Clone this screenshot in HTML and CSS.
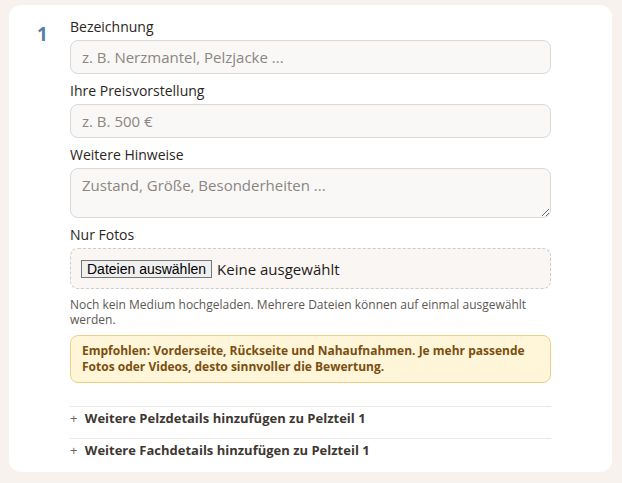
FILE: index.html
```html
<!DOCTYPE html>
<html lang="de">
<head>
    <meta charset="UTF-8">
    <meta name="viewport" content="width=device-width, initial-scale=1.0">
    <title>Pelzteil erfassen</title>
    <link rel="stylesheet" href="styles.css">
</head>
<body>

    <div class="card">
        <div class="item-number">1</div>
        <div class="item-fields">
            <div class="field">
                <label class="field-label">Bezeichnung</label>
                <input class="input" type="text" placeholder="z. B. Nerzmantel, Pelzjacke ...">
            </div>

            <div class="field">
                <label class="field-label">Ihre Preisvorstellung</label>
                <input class="input" type="text" placeholder="z. B. 500 €">
            </div>

            <div class="field">
                <label class="field-label">Weitere Hinweise</label>
                <textarea class="input textarea" placeholder="Zustand, Größe, Besonderheiten ..."></textarea>
            </div>

            <div class="field">
                <label class="field-label">Nur Fotos</label>
                <div class="upload">
                    <span class="upload-btn">Dateien auswählen</span>
                    <span class="upload-status">Keine ausgewählt</span>
                </div>
            </div>

            <p class="help">Noch kein Medium hochgeladen. Mehrere Dateien können auf einmal ausgewählt werden.</p>

            <div class="notice">
                Empfohlen: Vorderseite, Rückseite und Nahaufnahmen. Je mehr passende Fotos oder Videos, desto sinnvoller die Bewertung.
            </div>

            <div class="extras">
                <div class="extra-row"><span class="plus">+</span> Weitere Pelzdetails hinzufügen zu Pelzteil 1</div>
                <div class="extra-row"><span class="plus">+</span> Weitere Fachdetails hinzufügen zu Pelzteil 1</div>
            </div>
        </div>
    </div>

</body>
</html>
```

FILE: styles.css
```css
body {
    font-family: 'Open Sans', 'Noto Sans', sans-serif;
    background-color: #f7f2ee;
    margin: 0;
    padding: 5px 10px 0 9px;
    color: #2b2622;
}

.card {
    background-color: #fff;
    border-radius: 12px;
    padding: 13px 61px 2px 28px;
    display: grid;
    grid-template-columns: 33px 1fr;
}

.item-number {
    font-size: 19px;
    font-weight: bold;
    color: #5a7da3;
    padding-top: 4px;
    line-height: 24px;
}

.field {
    margin-bottom: 8px;
}

.field-label {
    display: block;
    font-size: 14px;
    font-weight: 500;
    line-height: 18px;
    margin-bottom: 4px;
}

.input {
    display: block;
    width: 100%;
    box-sizing: border-box;
    height: 34px;
    padding: 0 11px;
    font-family: inherit;
    font-size: 15px;
    color: #2b2622;
    background-color: #f9f8f6;
    border: 1px solid #dcd9d5;
    border-radius: 8px;
    outline: none;
}

.input::placeholder {
    color: #8b8681;
}

.textarea {
    height: 50px;
    padding: 6px 11px;
    resize: vertical;
}

.upload {
    height: 41px;
    box-sizing: border-box;
    border: 1px dashed #cfcbc6;
    border-radius: 8px;
    background-color: #faf6f3;
    display: flex;
    align-items: center;
    padding: 0 10px;
    gap: 5px;
}

.upload-btn {
    font-family: 'Liberation Sans', Arial, sans-serif;
    font-size: 14px;
    line-height: 16px;
    color: #000;
    background-color: #efefef;
    border: 1px solid #767676;
    padding: 0 5px;
}

.upload-status {
    font-size: 15px;
    font-weight: 500;
    color: #1f1b18;
}

.help {
    margin: 0 0 8px;
    font-size: 12px;
    line-height: 15px;
    color: #5c5853;
}

.notice {
    background-color: #fff5d9;
    border: 1px solid #eed184;
    border-radius: 8px;
    padding: 7px 11px;
    font-size: 12px;
    font-weight: bold;
    line-height: 16px;
    color: #7a4f10;
}

.extras {
    margin-top: 23px;
}

.extra-row {
    border-top: 1px solid #ebe8e5;
    padding: 3px 0 12px;
    font-size: 13px;
    font-weight: bold;
    line-height: 16px;
    color: #3e3833;
}

.plus {
    color: #6d6660;
    font-weight: normal;
    margin-right: 4px;
}
```
